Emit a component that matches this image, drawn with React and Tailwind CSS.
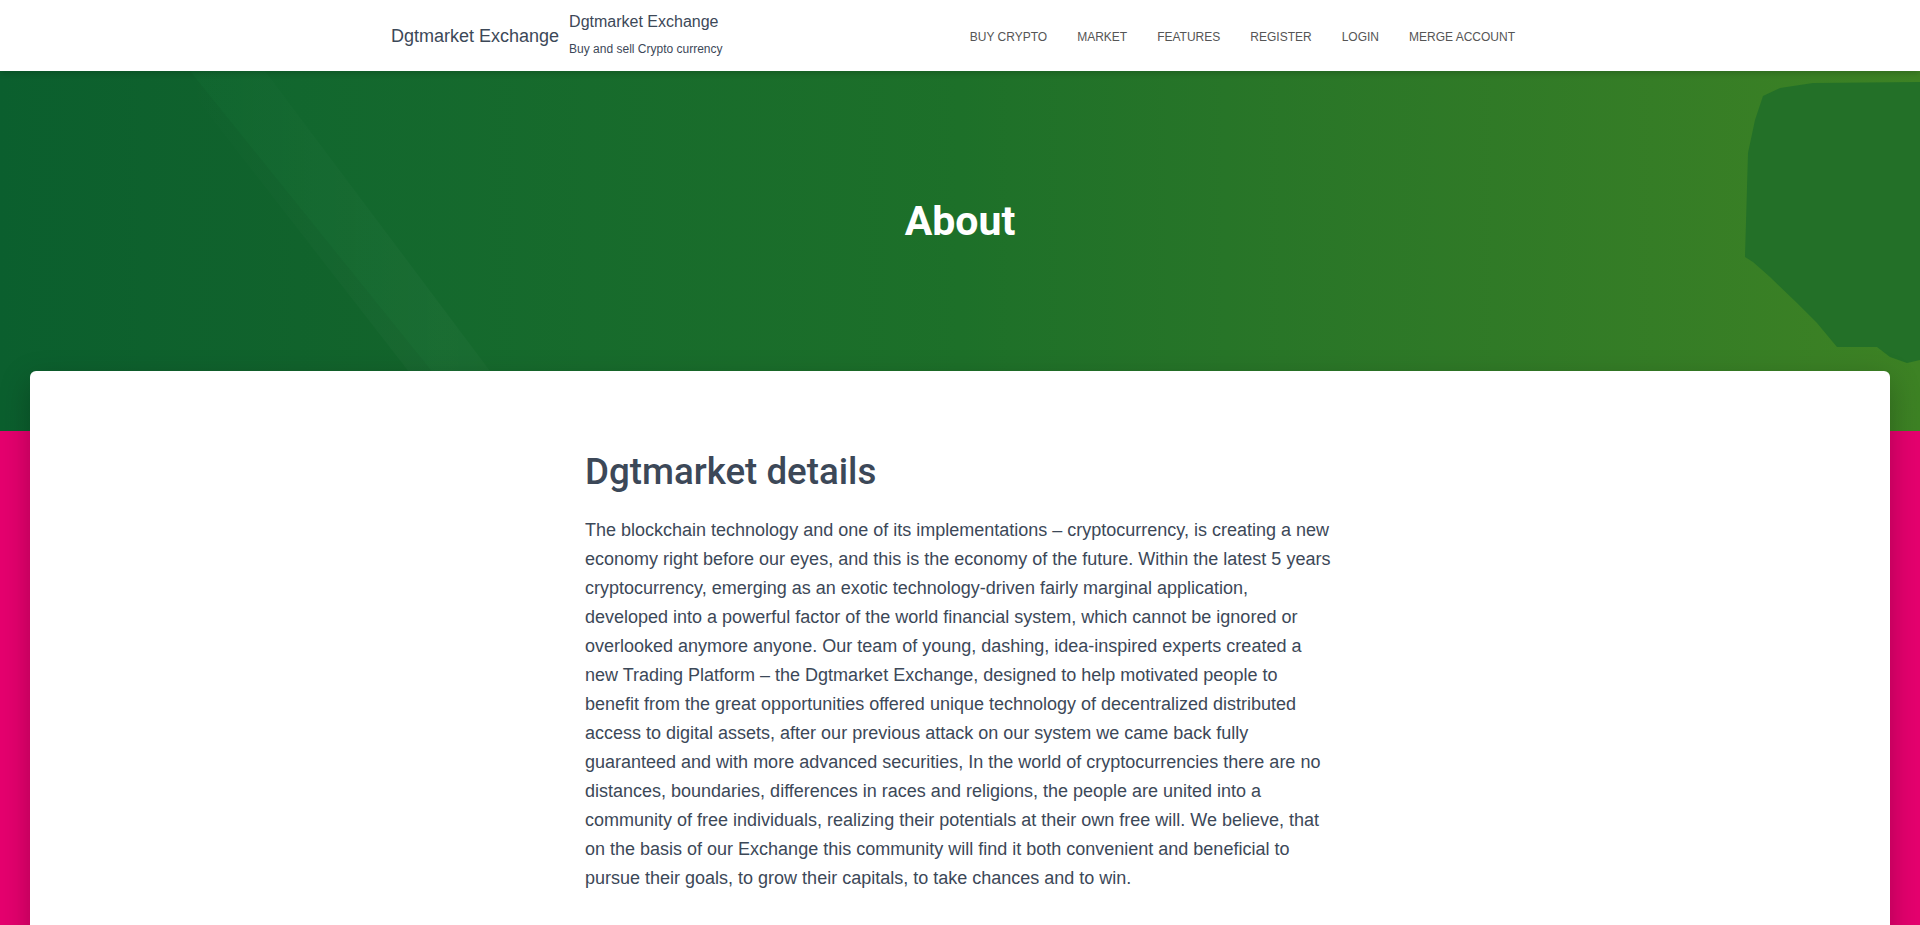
import React from 'react';

const navLinks = ['Buy Crypto', 'Market', 'Features', 'Register', 'Login', 'Merge Account'];

const paragraph =
  'The blockchain technology and one of its implementations – cryptocurrency, is creating a new economy right before our eyes, and this is the economy of the future. Within the latest 5 years cryptocurrency, emerging as an exotic technology-driven fairly marginal application, developed into a powerful factor of the world financial system, which cannot be ignored or overlooked anymore anyone. Our team of young, dashing, idea-inspired experts created a new Trading Platform – the Dgtmarket Exchange, designed to help motivated people to benefit from the great opportunities offered unique technology of decentralized distributed access to digital assets, after our previous attack on our system we came back fully guaranteed and with more advanced securities, In the world of cryptocurrencies there are no distances, boundaries, differences in races and religions, the people are united into a community of free individuals, realizing their potentials at their own free will. We believe, that on the basis of our Exchange this community will find it both convenient and beneficial to pursue their goals, to grow their capitals, to take chances and to win.';

function Navbar() {
  return (
    <header className="relative z-20 h-[71px] bg-white shadow-[0_2px_6px_rgba(0,0,0,0.18)] font-['Liberation_Sans',Arial,sans-serif]">
      <div className="mx-auto flex h-full w-[1140px] items-center">
        <a href="#" className="ml-px text-[18px] leading-none text-[#3c4858]">
          Dgtmarket Exchange
        </a>
        <div className="ml-[10px] flex flex-col self-start pt-[12px]">
          <span className="text-[16px] leading-[20px] text-[#3c4858]">Dgtmarket Exchange</span>
          <span className="mt-[10px] text-[12px] leading-[14px] text-[#3c4858]">
            Buy and sell Crypto currency
          </span>
        </div>
        <nav className="ml-auto flex items-center pt-[2px]">
          {navLinks.map((l) => (
            <a
              key={l}
              href="#"
              className="px-[15px] text-[12px] uppercase leading-none text-[#555]"
            >
              {l}
            </a>
          ))}
        </nav>
      </div>
    </header>
  );
}

function Hero() {
  return (
    <section className="relative h-[360px] overflow-hidden bg-linear-to-r from-[#0c6330] via-[#1d7029] to-[#3d8224]">
      {/* decorative shapes */}
      <svg
        className="absolute inset-0 h-full w-full"
        viewBox="0 0 1920 360"
        preserveAspectRatio="none"
      >
        <defs>
          <linearGradient id="band" x1="0" y1="0" x2="1" y2="0">
            <stop offset="0" stopColor="#ffffff" stopOpacity="0" />
            <stop offset="0.75" stopColor="#ffffff" stopOpacity="0.025" />
            <stop offset="1" stopColor="#ffffff" stopOpacity="0.015" />
          </linearGradient>
        </defs>
        <polygon points="0,0 190,0 480,360 0,360" fill="#000000" fillOpacity="0.035" />
        <polygon points="175,0 265,0 535,360 455,360" fill="url(#band)" />
        <path
          d="M1813 12 L1920 11 L1920 289 L1907 292 L1890 286 L1877 276 L1837 276 L1817 252 L1797 232 L1770 206 L1753 191 L1745 186 L1748 82 L1755 49 L1763 25 L1780 17 Z"
          fill="#237028"
        />
      </svg>
      <div className="relative flex justify-center pt-[126px]">
        <h1 className="font-['Roboto',sans-serif] text-[41px] font-bold leading-[48px] text-white">
          About
        </h1>
      </div>
    </section>
  );
}

export default function App() {
  return (
    <div className="min-h-screen bg-[#e5006e]">
      <Navbar />
      <Hero />
      <main className="relative z-10 -mt-[60px] px-[30px]">
        <div className="rounded-md bg-white pb-[120px] pt-[79px] shadow-[0_10px_30px_rgba(0,0,0,0.25)]">
          <div className="mx-auto w-[750px]">
            <h2 className="font-['Roboto',sans-serif] text-[36.7px] font-medium leading-[44px] text-[#3c4858]">
              Dgtmarket details
            </h2>
            <p className="mt-[22px] font-['Liberation_Sans',Arial,sans-serif] text-[18px] leading-[29px] text-[#3c4858]">
              {paragraph}
            </p>
          </div>
        </div>
      </main>
    </div>
  );
}
